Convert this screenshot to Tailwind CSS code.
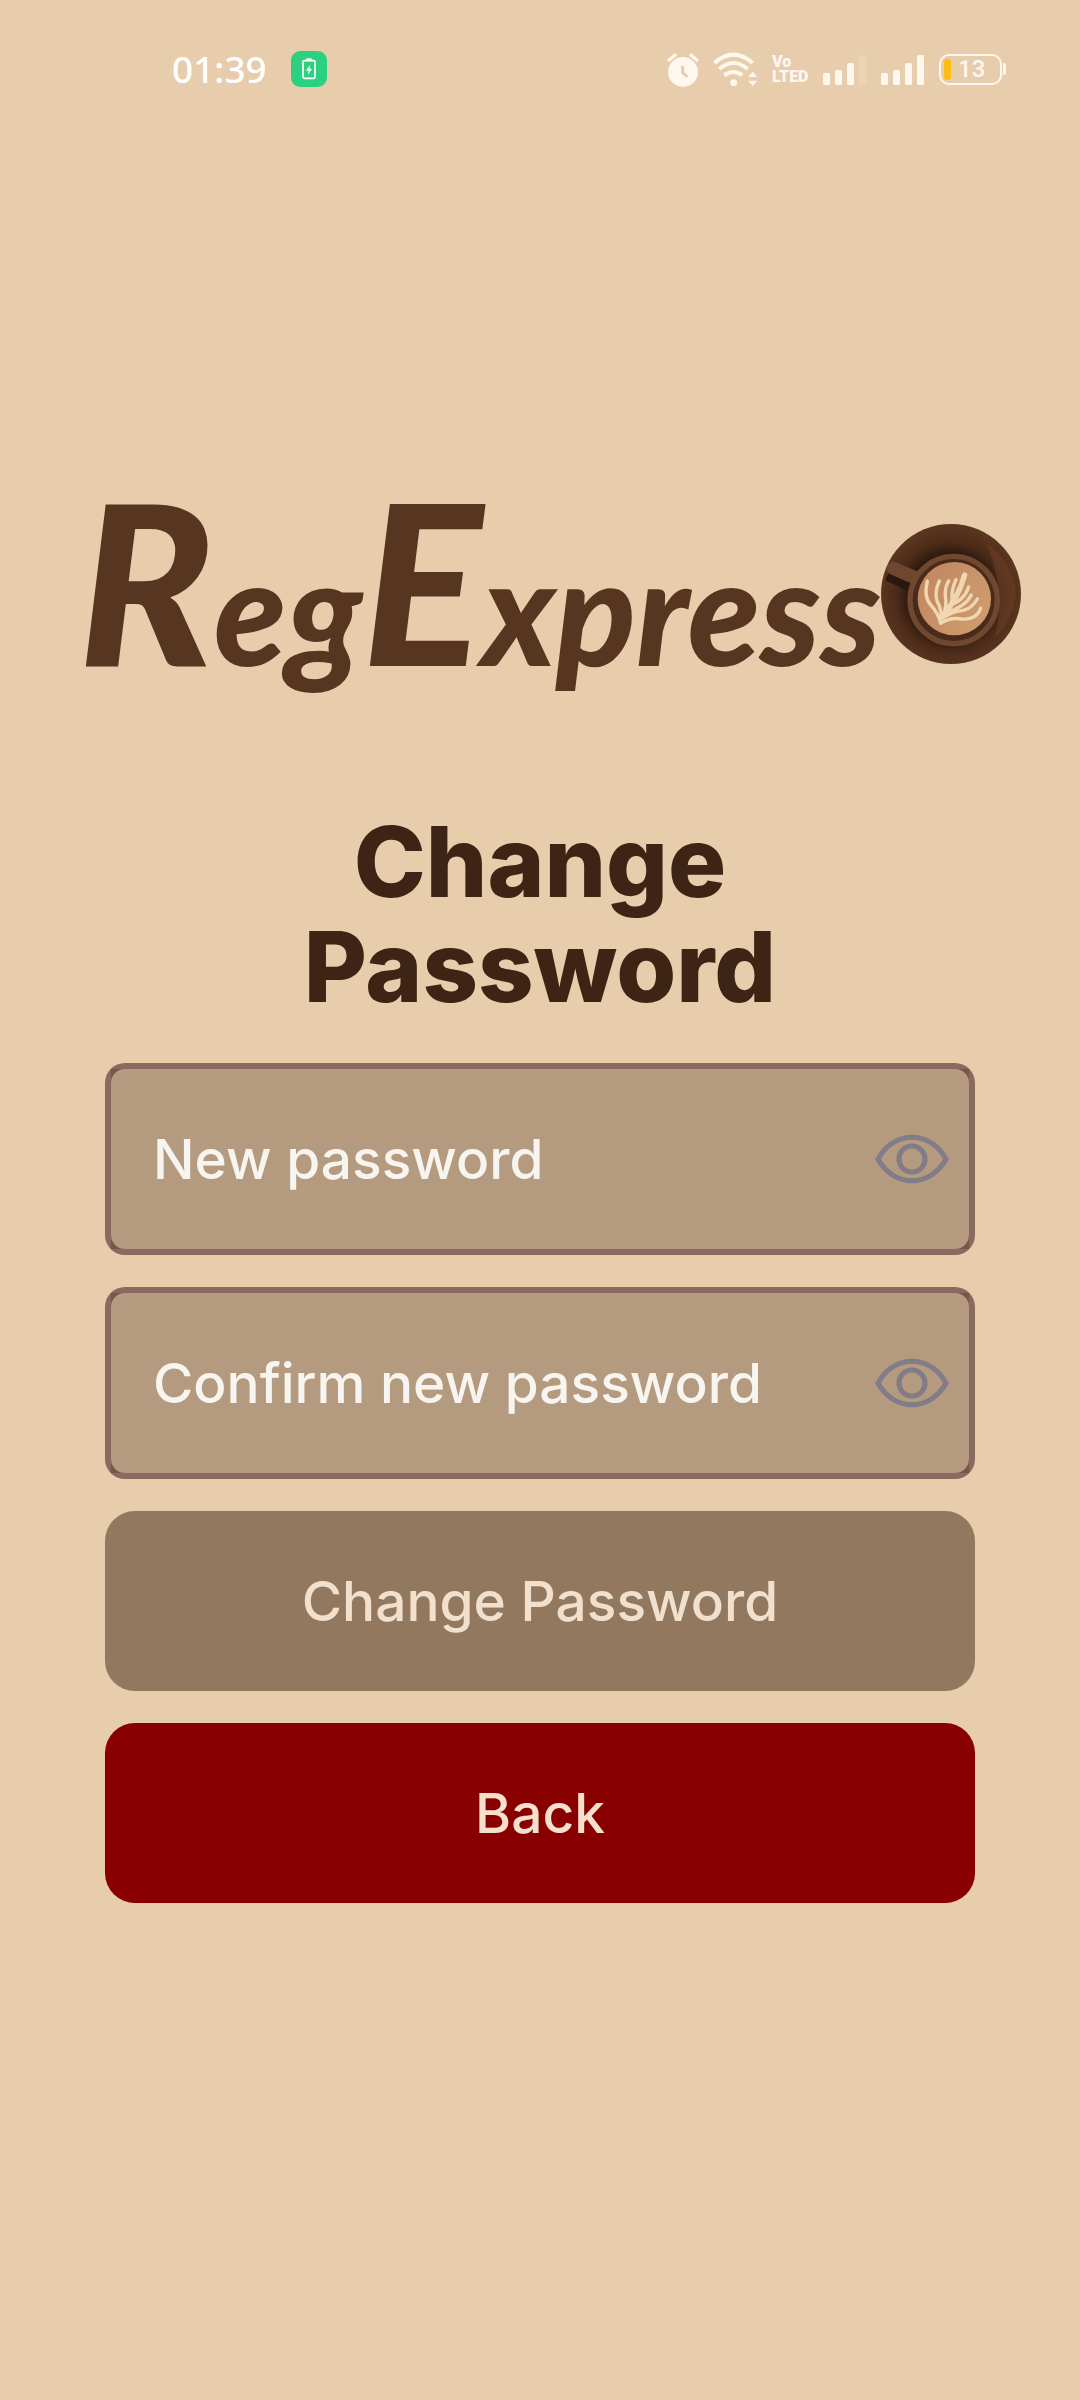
<!DOCTYPE html>
<html lang="en">
<head>
<meta charset="utf-8">
<meta name="viewport" content="width=device-width, initial-scale=1">
<title>RegExpresso - Change Password</title>
<script src="https://cdn.jsdelivr.net/npm/@tailwindcss/browser@4"></script>
</head>
<body class="min-h-screen bg-[#e7cdac] font-['Inter',sans-serif]">
<header class="flex h-[138px] items-center justify-between pr-[74px] pl-[172px]">
  <div class="flex items-center gap-6">
    <span class="font-['Noto_Sans',sans-serif] text-[37px] leading-[48px] font-medium text-white">01:39</span>
    <svg class="h-9 w-9" viewBox="0 0 108 108" aria-label="Charging">
      <rect width="108" height="108" rx="28" fill="#2bd180"/>
      <rect x="36" y="29" width="36" height="53" rx="4" fill="none" stroke="#fff" stroke-width="5"/>
      <path d="M46 22h16v7H46z" fill="#fff"/>
      <path d="M57 41 45 59h8l-2 12 12-18h-8z" fill="#fff"/>
    </svg>
  </div>
  <div class="flex items-center gap-[14px] text-[#fdf7ee]">
    <svg class="h-9 w-8" viewBox="78 60 96 108" aria-label="Alarm">
      <circle cx="126" cy="123" r="45" fill="currentColor"/>
      <path d="M81 90 105 70M147 70l24 20" stroke="currentColor" stroke-width="10"/>
      <path d="M125 105v20l14 13" fill="none" stroke="#e7cdac" stroke-width="9"/>
    </svg>
    <svg class="h-9 w-[45px]" viewBox="222 60 135 108" aria-label="Wi-Fi">
      <g fill="none" stroke="currentColor" stroke-width="12">
        <path d="M226 96q57-50 115 0"/><path d="M241 114q42-36 85 0"/><path d="M256 133q27-20 54 0"/>
      </g>
      <circle cx="284" cy="155" r="10" fill="currentColor"/>
      <path d="m341 122 14 16h-28zM327 149h28l-14 16z" fill="currentColor"/>
    </svg>
    <div class="w-[37px] font-['Roboto',sans-serif] text-[16px] leading-[15px] font-black"><div>Vo</div><div>LTED</div></div>
    <svg class="h-9 w-11" viewBox="549 60 132 108" aria-label="Signal, SIM 1">
      <g fill="currentColor"><rect x="549" y="126" width="21" height="36" rx="5"/><rect x="585" y="117" width="21" height="45" rx="5"/><rect x="621" y="96" width="21" height="66" rx="5"/><rect x="657" y="72" width="21" height="90" rx="5" opacity=".2"/></g>
    </svg>
    <svg class="h-9 w-11" viewBox="720 60 132 108" aria-label="Signal, SIM 2">
      <g fill="currentColor"><rect x="720" y="126" width="21" height="36" rx="5"/><rect x="756" y="117" width="21" height="45" rx="5"/><rect x="792" y="96" width="21" height="66" rx="5"/><rect x="828" y="72" width="21" height="90" rx="5"/></g>
    </svg>
    <div class="flex items-center gap-px">
      <div class="flex h-[31px] w-[63px] items-center gap-[7px] rounded-[10px] border-2 border-current pl-[3px]">
        <span class="h-[21px] w-[7px] rounded-[3px] bg-[#fdbc14]"></span>
        <span class="font-['Roboto',sans-serif] text-[24px] leading-6 font-medium">13</span>
      </div>
      <span class="h-3 w-[3px] rounded-r-sm bg-current"></span>
    </div>
  </div>
</header>
<main>
  <div class="pt-[316px] pb-[75px]">
    <div class="flex h-[280px] items-center justify-end pr-[59px]" role="img" aria-label="RegExpresso">
      <span class="font-['Lato',sans-serif] text-[148px] leading-[280px] font-black text-[#563620] italic"><span class="text-[224px]">R</span>eg<span class="text-[224px]">E</span>xpress</span>
      <svg class="h-[140px] w-[140px] shrink-0" viewBox="63 73 420 420">
        <defs>
          <radialGradient id="saucer" cx="50%" cy="52%" r="50%"><stop offset=".62" stop-color="#2f1a10"/><stop offset=".78" stop-color="#4b2b18"/><stop offset="1" stop-color="#5a3520"/></radialGradient>
          <linearGradient id="coffee" x1="0" y1="0" x2="1" y2=".6"><stop offset="0" stop-color="#c08460"/><stop offset="1" stop-color="#ce9c6c"/></linearGradient>
        </defs>
        <circle cx="273" cy="283" r="210" fill="url(#saucer)"/>
        <path d="M380 130q80 60 88 150-12 90-64 134 36-130-24-284z" fill="#70422a" opacity=".5"/>
        <path d="m82 228 86 40" stroke="#2b170d" stroke-width="30"/>
        <path d="m100 206 84 36" stroke="#6f4730" stroke-width="40" stroke-linecap="round"/>
        <circle cx="281" cy="301" r="131" fill="#4a2a1b" stroke="#70482f" stroke-width="16"/>
        <circle cx="283" cy="297" r="110" fill="url(#coffee)"/>
        <g fill="none" stroke="#f0d7b2" stroke-width="10" stroke-linecap="round">
          <path d="M242 370q-8-30-28-52-24-24-12-74"/><path d="M242 370q6-36-10-64-10-28 6-62"/><path d="M248 350q14-34 8-60-2-28 10-46"/><path d="M250 346q46-54 64-120" stroke-width="16"/><path d="M276 302q-2-34 12-62"/>
          <path d="M266 318q46-14 60-56"/><path d="M258 338q56-14 76-52"/><path d="M250 354q30-20 60-22 26-6 42-34"/><path d="M242 370q30-18 62-12 46 4 58-32"/>
        </g>
      </svg>
    </div>
  </div>
  <form class="mx-[105px] flex flex-col gap-8">
    <h1 class="mb-3 text-center text-[97px] leading-[105px] font-extrabold text-[#3e2414]">Change<br>Password</h1>
    <div class="overflow-hidden rounded-[20px] bg-[#8a695e] p-[6px]">
      <div class="bg-[#785645]">
        <div class="flex h-[180px] items-center rounded-[14px] bg-[#b49a7e] pr-5 pl-[42px]">
          <input type="password" aria-label="New password" placeholder="New password" class="h-full min-w-0 flex-1 bg-transparent text-[55px] font-medium text-[#f8f5f0] outline-none placeholder:text-[#f8f5f0]">
          <button type="button" aria-label="Show password" class="shrink-0">
            <svg class="h-[50px] w-[74px]" viewBox="0 0 74 50" fill="none" stroke="#817c87" stroke-width="5"><path d="M3 25C19-4 55-4 71 25 55 54 19 54 3 25z"/><circle cx="37" cy="25" r="13"/></svg>
          </button>
        </div>
      </div>
    </div>
    <div class="overflow-hidden rounded-[20px] bg-[#8a695e] p-[6px]">
      <div class="bg-[#785645]">
        <div class="flex h-[180px] items-center rounded-[14px] bg-[#b49a7e] pr-5 pl-[42px]">
          <input type="password" aria-label="Confirm new password" placeholder="Confirm new password" class="h-full min-w-0 flex-1 bg-transparent text-[55px] font-medium text-[#f8f5f0] outline-none placeholder:text-[#f8f5f0]">
          <button type="button" aria-label="Show password" class="shrink-0">
            <svg class="h-[50px] w-[74px]" viewBox="0 0 74 50" fill="none" stroke="#817c87" stroke-width="5"><path d="M3 25C19-4 55-4 71 25 55 54 19 54 3 25z"/><circle cx="37" cy="25" r="13"/></svg>
          </button>
        </div>
      </div>
    </div>
    <button type="submit" class="h-[180px] rounded-[30px] bg-[#92785f] text-[55px] font-medium text-[#f0e0cd]">Change Password</button>
    <button type="button" class="h-[180px] rounded-[30px] bg-[#890000] text-[55px] font-medium text-[#f4e0cd]">Back</button>
  </form>
</main>
</body>
</html>
